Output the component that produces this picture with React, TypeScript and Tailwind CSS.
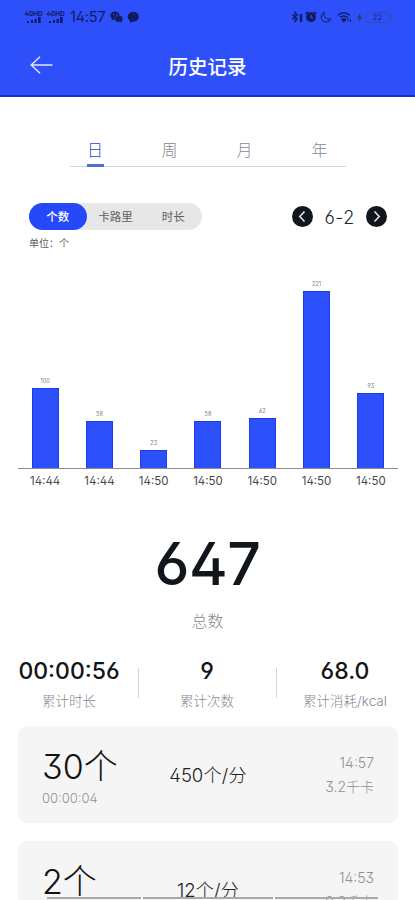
import React, { useState } from 'react';

const TABS = [
  { label: '日', width: 'w-[50px]' },
  { label: '周', width: 'w-[99px]' },
  { label: '月', width: 'w-[51px]' },
  { label: '年', width: 'w-[99px]' },
];

const METRICS = ['个数', '卡路里', '时长'];

const BARS = [
  { value: 100, time: '14:44' },
  { value: 58, time: '14:44' },
  { value: 23, time: '14:50' },
  { value: 58, time: '14:50' },
  { value: 62, time: '14:50' },
  { value: 221, time: '14:50' },
  { value: 93, time: '14:50' },
];

const RECORDS = [
  { count: '30个', duration: '00:00:04', speed: '450个/分', time: '14:57', energy: '3.2千卡' },
  { count: '2个', duration: '00:00:10', speed: '12个/分', time: '14:53', energy: '0.2千卡' },
];

const Signal = ({ label }: { label: string }) => (
  <div className="flex w-[19px] flex-col items-center">
    <span className="h-[6px] text-[6.5px] font-bold leading-[6px] tracking-tight">{label}</span>
    <svg width="15" height="7" viewBox="0 0 15 7" fill="currentColor">
      <rect x="1" y="4" width="2" height="2" />
      <rect x="5" y="3" width="2" height="3" />
      <rect x="8.5" y="2" width="2.2" height="4" />
      <rect x="12" y="0" width="2.6" height="6" />
    </svg>
  </div>
);

const StatusBar = () => (
  <div className="flex h-[34px] items-center justify-between pl-6 pr-[22px] text-[#101c5e]">
    <div className="flex items-center">
      <Signal label="4GHD" />
      <span className="w-[3px]" />
      <Signal label="4GHD" />
      <span className="ml-[5px] w-[37px] text-[14.5px] leading-4 tracking-[-0.2px]">14:57</span>
      <svg className="ml-[3px]" width="13" height="12" viewBox="0 0 13 12" fill="currentColor">
        <ellipse cx="5" cy="4.5" rx="4.7" ry="4" />
        <ellipse cx="8.7" cy="7.7" rx="4" ry="3.4" stroke="#2e50fb" strokeWidth=".4" />
        <path d="M2 7.5 1.5 9.5 4 8.3ZM10 10.5l1.5 1.3.3-2Z" />
        <circle cx="3.6" cy="3.6" r=".6" fill="#2e50fb" />
        <circle cx="6.4" cy="3.6" r=".6" fill="#2e50fb" />
      </svg>
      <svg className="ml-1" width="13" height="12" viewBox="0 0 13 12" fill="currentColor">
        <ellipse cx="6.3" cy="5.7" rx="5.6" ry="5" />
        <path d="M3 9v2.8L7 10Z" />
      </svg>
    </div>
    <div className="flex items-center">
      <svg width="13" height="12" viewBox="0 0 13 12" fill="none" stroke="currentColor" strokeWidth="1.1">
        <path d="M1 3.5 6.5 8 4 10.7V1.3L6.5 4 1 8.5" />
        <path d="M10 3v8" strokeWidth="2.4" />
      </svg>
      <svg className="ml-px" width="12" height="12" viewBox="0 0 12 12" fill="currentColor">
        <circle cx="6" cy="6.3" r="5" />
        <path d="M.6 3 3 .8M11.4 3 9 .8" stroke="currentColor" strokeWidth="1.6" />
        <path d="M6 4v2.6h2" fill="none" stroke="#2e50fb" strokeWidth="1.2" />
      </svg>
      <svg className="ml-[3px]" width="12" height="12" viewBox="0 0 12 12" fill="none" stroke="currentColor">
        <path d="M4.3 1.4a5 5 0 1 0 6.5 6.5A5 5 0 0 1 4.3 1.4Z" />
      </svg>
      <svg className="ml-[5px]" width="15" height="12" viewBox="0 0 15 12" fill="none" stroke="currentColor" strokeWidth="1.4">
        <path d="M1 4.2a8.5 8.5 0 0 1 11.6 0M3 6.5a5.5 5.5 0 0 1 7.6 0M5 8.5a3 3 0 0 1 3.6 0L6.8 10.5Z" />
        <path d="M11 10.5V7m2.5 1v3" strokeWidth="1" />
      </svg>
      <svg className="ml-1" width="7" height="11" viewBox="0 0 7 11" fill="#30375a">
        <path d="M4.5 1 .8 6h2.4L2.5 10 6.3 4.8H3.8Z" />
      </svg>
      <div className="ml-[2px] flex h-[11px] w-[25px] items-center justify-center rounded-[4px] border border-[#3748a9] text-[8px] leading-none text-[#1c2c85]">22</div>
      <span className="ml-px h-1 w-[2px] rounded-r-full bg-[#3748a9]" />
    </div>
  </div>
);

const Arrow = ({ d }: { d: string }) => (
  <button className="flex size-[21px] items-center justify-center rounded-full bg-[#11151c]">
    <svg width="21" height="21" viewBox="0 0 21 21" fill="none" stroke="#dfe2e8" strokeWidth="1.6">
      <path d={d} />
    </svg>
  </button>
);

const Stat = ({ value, label }: { value: string; label: string }) => (
  <div className="flex w-[138px] shrink-0 flex-col items-center">
    <span className="whitespace-nowrap text-[23px] font-[450] leading-7 text-[#111419]">{value}</span>
    <span className="mt-[6px] whitespace-nowrap text-[13.5px] font-light leading-5 text-[#858991]">{label}</span>
  </div>
);

export default function App() {
  const [tab, setTab] = useState(0);
  const [metric, setMetric] = useState(0);

  return (
    <div className="relative flex h-[900px] w-[415px] flex-col overflow-hidden bg-white font-['Inter','Noto_Sans_CJK_SC',sans-serif] [font-feature-settings:'ss01','cv03','cv04']">
      <header className="h-[97px] shrink-0 border-b-2 border-[#1230d8] bg-[#2e50fb]">
        <StatusBar />
        <div className="flex h-[62px] items-center">
          <button className="ml-[30px] w-[23px]">
            <svg width="23" height="18" viewBox="0 0 23 18" fill="none" stroke="#e2e8ff" strokeWidth="1.4">
              <path d="M22.5 9H1.5M10 .8 1.2 9 10 17.2" />
            </svg>
          </button>
          <h1 className="w-[309px] pt-[5px] text-center text-[19.5px] font-medium text-white">历史记录</h1>
        </div>
      </header>

      <nav className="mx-[70px] mt-[34px] flex h-9 w-[276px] shrink-0 justify-between border-b border-[#d3d5da]">
        {TABS.map((item, i) => (
          <button
            key={item.label}
            onClick={() => setTab(i)}
            className={`flex h-9 shrink-0 flex-col items-center justify-between ${item.width} ${
              tab === i ? 'text-[#2944d9]' : 'text-[#85888e]'
            }`}
          >
            <span className="pt-[7px] text-[16px] font-light leading-6">{item.label}</span>
            <span className={`h-[3px] w-[17px] ${tab === i ? 'bg-[#526bdd]' : ''}`} />
          </button>
        ))}
      </nav>

      <div className="mt-[35px] flex h-7 shrink-0 items-center justify-between pl-[29px] pr-7">
        <div className="flex h-[27px] w-[173px] rounded-full bg-[#e7e7e7] text-[11.5px]">
          {METRICS.map((name, i) => (
            <button
              key={name}
              onClick={() => setMetric(i)}
              className={`w-[58px] rounded-full pt-[3px] ${metric === i ? 'bg-[#2548f8] font-medium text-white' : 'text-[#606060]'}`}
            >
              {name}
            </button>
          ))}
        </div>
        <div className="flex items-center">
          <Arrow d="M12.5 5.5 7.8 10.5l4.7 5" />
          <span className="w-[53px] pt-[3px] text-center text-[18px] font-light leading-5 tracking-[0.4px] text-[#25282d]">6-2</span>
          <Arrow d="m8.5 5.5 4.7 5-4.7 5" />
        </div>
      </div>
      <p className="mt-[5px] h-4 shrink-0 pl-[29px] text-[10px] leading-4 text-[#606060]">单位：个</p>

      <section className="ml-[18px] mr-[17px] mt-[18px] shrink-0">
        <div className="flex h-[200px] items-end border-b border-[#8d8d91]">
          {BARS.map((bar, i) => (
            <div key={i} className="flex flex-1 flex-col items-center">
              <span className="mb-[3px] text-[5.5px] leading-[7px] text-[#77777a]">{bar.value}</span>
              <div className="w-[27px] border border-b-0 border-[#1c39ed] bg-[#2e50fb]" style={{ height: bar.value * 0.803 }} />
            </div>
          ))}
        </div>
        <div className="mt-1 flex h-4">
          {BARS.map((bar, i) => (
            <span key={i} className="flex-1 text-center text-[11.5px] leading-4 text-[#46484d]">{bar.time}</span>
          ))}
        </div>
      </section>

      <section className="mt-[42px] flex shrink-0 flex-col items-center">
        <span className="h-[66px] text-[59px] font-[450] leading-[66px] tracking-[-0.5px] text-[#11151c]">647</span>
        <span className="mt-[12px] text-[16px] font-light leading-6 text-[#858991]">总数</span>
      </section>

      <section className="mt-[22px] flex h-[58px] shrink-0 items-center">
        <Stat value="00:00:56" label="累计时长" />
        <span className="-mr-px mt-[-2px] h-[30px] w-px shrink-0 bg-[#d4d6da]" />
        <Stat value="9" label="累计次数" />
        <span className="-mr-px mt-[-2px] h-[30px] w-px shrink-0 bg-[#d4d6da]" />
        <Stat value="68.0" label="累计消耗/kcal" />
      </section>

      <section className="ml-[18px] mr-[17px] mt-[13px] flex shrink-0 flex-col gap-[18px]">
        {RECORDS.map((record) => (
          <div key={record.time} className="flex h-[97px] rounded-[9px] bg-[#f5f5f5] pl-6 pr-6">
            <div className="flex w-[105px] flex-col pt-[22px]">
              <span className="text-[34px] font-light leading-[38px] text-[#111]">{record.count}</span>
              <span className="mt-[2px] text-[13px] font-light leading-5 text-[#8b909b]">{record.duration}</span>
            </div>
            <span className="w-[122px] pt-[37px] text-center text-[18.5px] font-light leading-6 text-[#222]">{record.speed}</span>
            <div className="flex flex-1 flex-col pt-[25px] text-right text-[14px] font-light leading-6 text-[#8d9096]">
              <span>{record.time}</span>
              <span>{record.energy}</span>
            </div>
          </div>
        ))}
      </section>

      {/* system gesture bar */}
      <div className="absolute bottom-[1px] left-[47px] flex gap-[2px]">
        <span className="h-[2px] w-[94px] bg-[#aaaaac]" />
        <span className="h-[2px] w-[130px] bg-[#aaaaac]" />
        <span className="h-[2px] w-[103px] bg-[#aaaaac]" />
      </div>
    </div>
  );
}
